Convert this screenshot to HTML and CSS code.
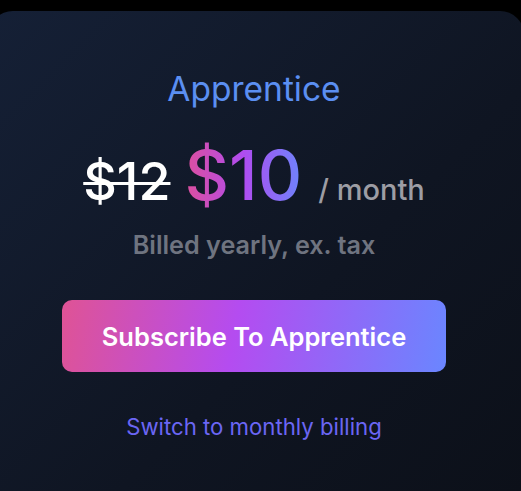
FILE: index.html
```html
<!DOCTYPE html>
<html lang="en">
<head>
<meta charset="utf-8">
<link rel="stylesheet" href="styles.css">
</head>
<body>
  <div class="card">
    <h2 class="plan">Apprentice</h2>
    <div class="price-row">
      <span class="old-price">$12</span>
      <span class="new-price">$10</span>
      <span class="period">/ month</span>
    </div>
    <p class="billing">Billed yearly, ex. tax</p>
    <button class="subscribe">Subscribe To Apprentice</button>
    <a class="switch" href="#">Switch to monthly billing</a>
  </div>
</body>
</html>
```
FILE: styles.css
```css
html, body {
  margin: 0;
  padding: 0;
  background: #000;
  height: 100%;
  overflow: hidden;
}
body {
  font-family: Inter, "Noto Sans", sans-serif;
  padding-top: 11px;
  box-sizing: border-box;
}
.card {
  margin-left: -11px;
  width: 535px;
  height: 480px;
  box-sizing: border-box;
  border-radius: 24px 24px 0 0;
  background: linear-gradient(135deg, #152036 0%, #0f1522 60%, #0c1019 100%);
  display: flex;
  flex-direction: column;
  align-items: center;
  padding: 58px 16px 0 11px;
}
.plan {
  margin: 0;
  font-size: 33.5px;
  font-weight: 400;
  color: #5b8ff2;
  line-height: 40px;
}
.price-row {
  display: flex;
  align-items: baseline;
  margin-top: 32px;
  line-height: 1;
}
.old-price {
  font-size: 52px;
  font-weight: 500;
  color: #fff;
  text-decoration: line-through;
  text-decoration-thickness: 3px;
}
.new-price {
  font-size: 69px;
  font-weight: 500;
  margin-left: 14px;
  background: linear-gradient(90deg, #dd4f9c 0%, #b04cf0 50%, #6d84fb 100%);
  -webkit-background-clip: text;
  background-clip: text;
  color: transparent;
}
.period {
  font-size: 29px;
  font-weight: 500;
  color: #9d9da4;
  margin-left: 16px;
}
.billing {
  margin: 20px 0 0;
  font-size: 25.2px;
  font-weight: 600;
  color: #6f7480;
}
.subscribe {
  margin-top: 40px;
  width: 384px;
  height: 72px;
  border: 0;
  border-radius: 10px;
  background: linear-gradient(100deg, #df5395 0%, #b44cf0 45%, #6a86ff 100%);
  color: #fff;
  font-family: inherit;
  font-size: 25.5px;
  font-weight: 600;
}
.switch {
  margin-top: 41px;
  font-size: 22.2px;
  color: #6b66f4;
  text-decoration: none;
}
```
